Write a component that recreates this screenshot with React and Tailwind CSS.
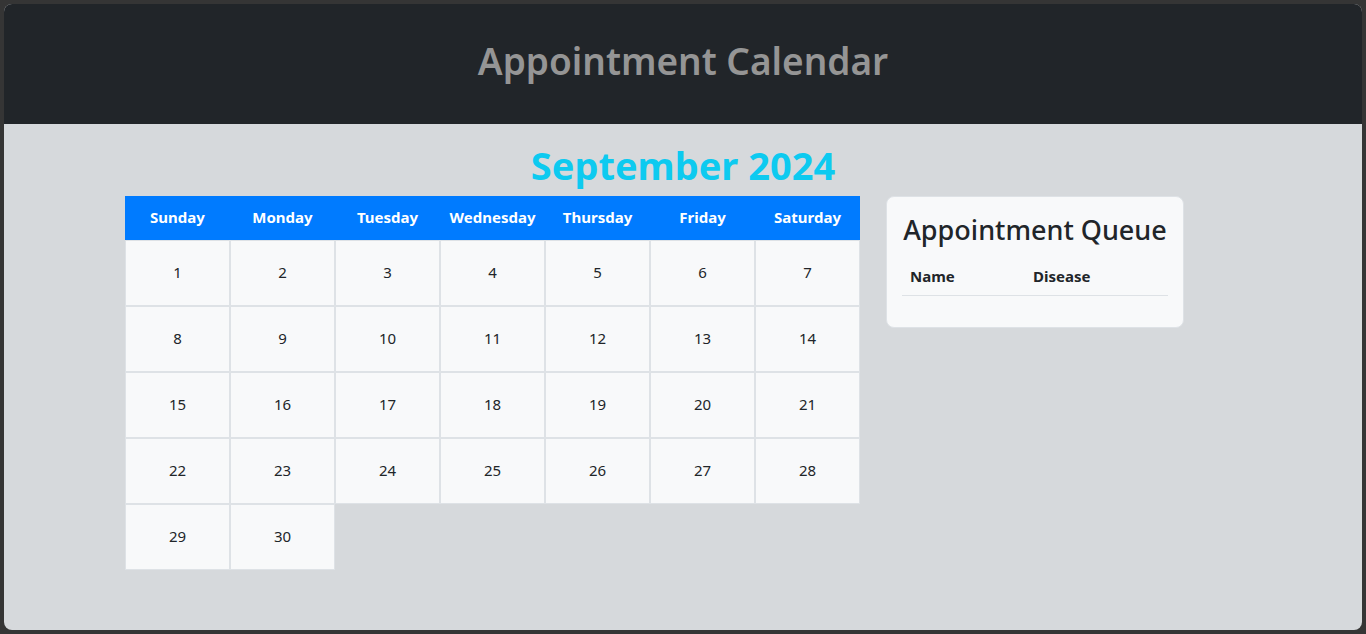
import React from "react";

const days = ["Sunday", "Monday", "Tuesday", "Wednesday", "Thursday", "Friday", "Saturday"];

function buildWeeks() {
    // September 2024 starts on a Sunday
    const weeks = [];
    let week = [];
    for (let d = 1; d <= 30; d++) {
        week.push(d);
        if (week.length === 7) {
            weeks.push(week);
            week = [];
        }
    }
    if (week.length) weeks.push(week);
    return weeks;
}

function Calendar() {
    const weeks = buildWeeks();
    return (
        <div className="w-[735px] shrink-0">
            <div className="flex bg-[#007bff] h-[44px]">
                {days.map((day) => (
                    <div key={day} className="w-[105px] flex items-center justify-center text-white font-bold text-[15px]">
                        {day}
                    </div>
                ))}
            </div>
            {weeks.map((week, i) => (
                <div key={i} className="flex">
                    {week.map((d) => (
                        <div
                            key={d}
                            className="w-[105px] h-[66px] border border-[#dee2e6] bg-[#f8f9fa] flex items-center justify-center text-[15px] text-[#212529]"
                        >
                            {d}
                        </div>
                    ))}
                </div>
            ))}
        </div>
    );
}

function Queue() {
    return (
        <div className="w-[298px] self-start bg-[#f8f9fa] border border-[#dee2e6] rounded-lg px-[15px] pt-[17px] pb-[31px]">
            <h2 className="text-[27px] font-medium text-[#212529] text-center leading-[1.2] mb-[11px]">
                Appointment Queue
            </h2>
            <table className="w-full text-left text-[15px] text-[#212529]">
                <thead>
                    <tr className="border-b border-[#dee2e6]">
                        <th className="w-[123px] px-2 py-2 font-bold">Name</th>
                        <th className="px-2 py-2 font-bold">Disease</th>
                    </tr>
                </thead>
                <tbody></tbody>
            </table>
        </div>
    );
}

export default function App() {
    return (
        <div className="h-[634px] bg-[#353535] p-[4px] font-['Noto_Sans',sans-serif]">
            <div className="h-full rounded-lg overflow-hidden bg-[#d6d9dc] flex flex-col">
                <header className="h-[120px] bg-[#212529] flex items-center justify-center shrink-0 pb-[7px]">
                    <h1 className="text-[37px] font-semibold text-[#959595] leading-none">Appointment Calendar</h1>
                </header>
                <main className="flex-1">
                    <h2 className="text-center text-[38px] font-bold text-[#0dcaf0] leading-[1.2] mt-[19px] mb-[7px]">
                        September 2024
                    </h2>
                    <div className="w-[1140px] mx-auto px-3 flex gap-[26px]">
                        <Calendar />
                        <Queue />
                    </div>
                </main>
            </div>
        </div>
    );
}
